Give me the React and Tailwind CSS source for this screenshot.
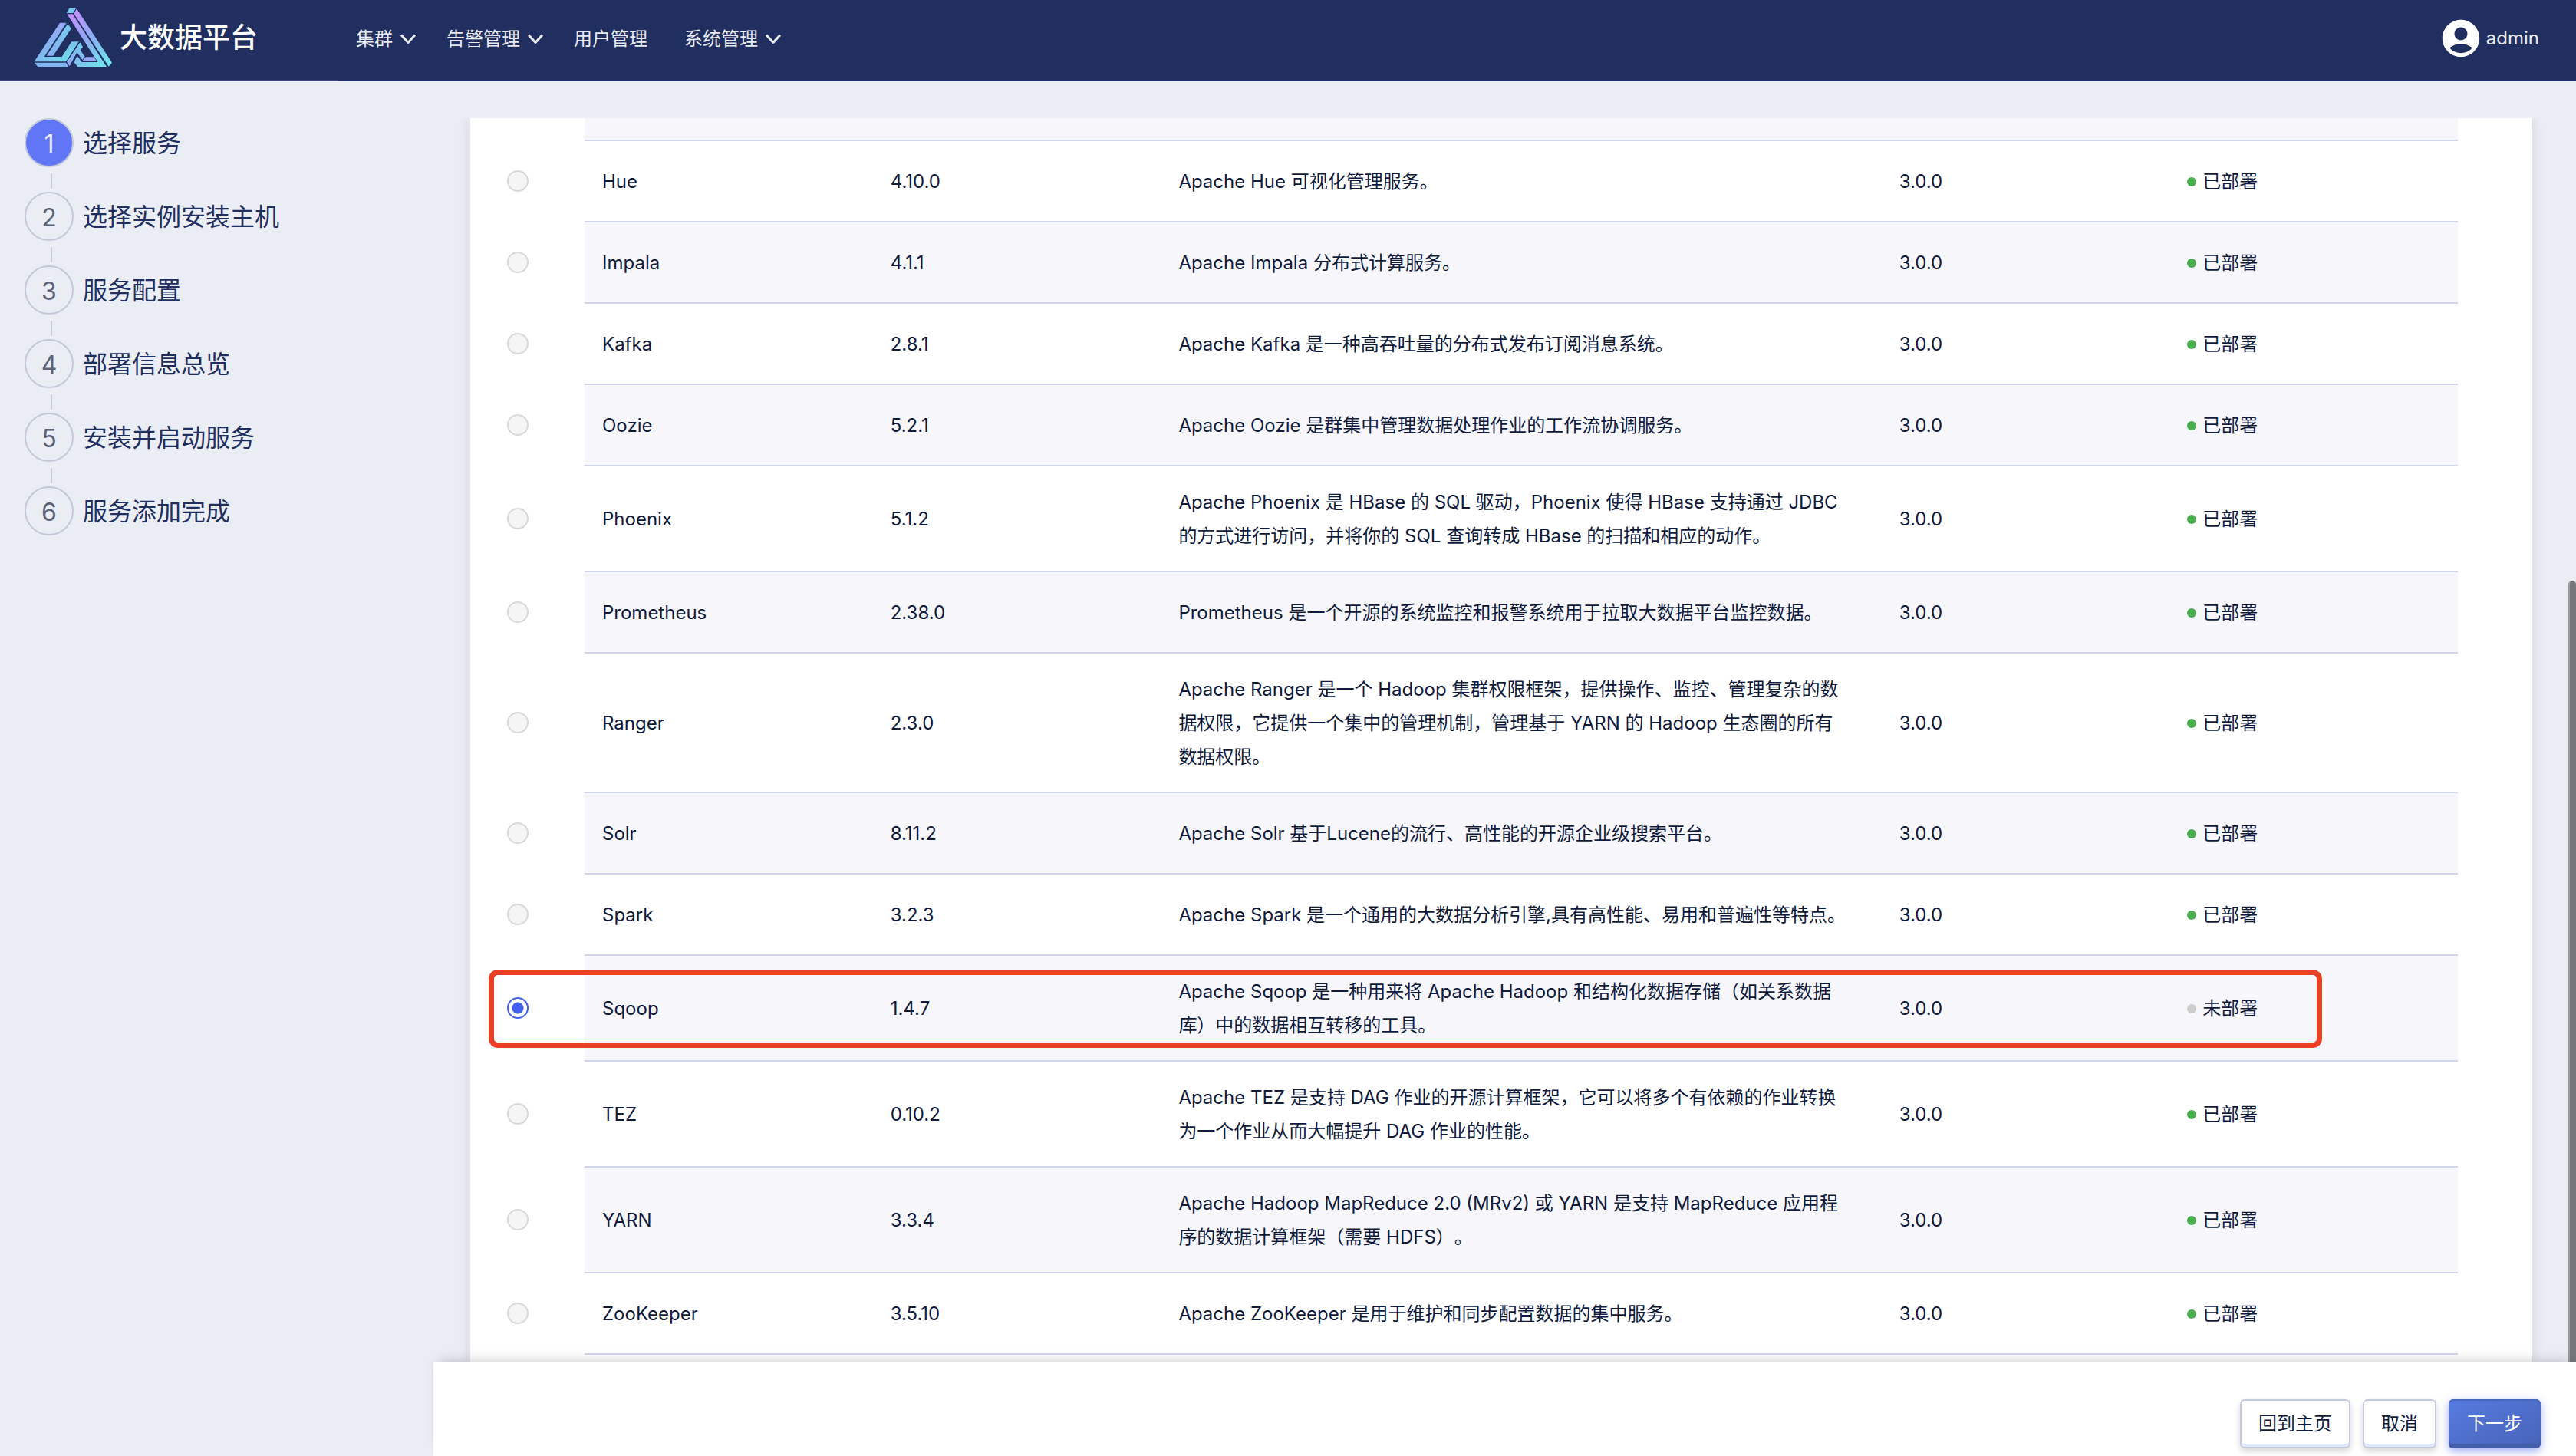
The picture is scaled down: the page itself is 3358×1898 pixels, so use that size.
import { MdAccountCircle } from "react-icons/md";

const STEPS = ["选择服务", "选择实例安装主机", "服务配置", "部署信息总览", "安装并启动服务", "服务添加完成"];

const NAV = [
  { label: "集群", menu: true },
  { label: "告警管理", menu: true },
  { label: "用户管理", menu: false },
  { label: "系统管理", menu: true },
];

const SERVICES = [
  { name: "Hue", version: "4.10.0", text: "Apache Hue 可视化管理服务。", deployed: true },
  { name: "Impala", version: "4.1.1", text: "Apache Impala 分布式计算服务。", deployed: true },
  { name: "Kafka", version: "2.8.1", text: "Apache Kafka 是一种高吞吐量的分布式发布订阅消息系统。", deployed: true },
  { name: "Oozie", version: "5.2.1", text: "Apache Oozie 是群集中管理数据处理作业的工作流协调服务。", deployed: true },
  { name: "Phoenix", version: "5.1.2", text: "Apache Phoenix 是 HBase 的 SQL 驱动，Phoenix 使得 HBase 支持通过 JDBC\n的方式进行访问，并将你的 SQL 查询转成 HBase 的扫描和相应的动作。", deployed: true },
  { name: "Prometheus", version: "2.38.0", text: "Prometheus 是一个开源的系统监控和报警系统用于拉取大数据平台监控数据。", deployed: true },
  { name: "Ranger", version: "2.3.0", text: "Apache Ranger 是一个 Hadoop 集群权限框架，提供操作、监控、管理复杂的数\n据权限，它提供一个集中的管理机制，管理基于 YARN 的 Hadoop 生态圈的所有\n数据权限。", deployed: true },
  { name: "Solr", version: "8.11.2", text: "Apache Solr 基于Lucene的流行、高性能的开源企业级搜索平台。", deployed: true },
  { name: "Spark", version: "3.2.3", text: "Apache Spark 是一个通用的大数据分析引擎,具有高性能、易用和普遍性等特点。", deployed: true },
  { name: "Sqoop", version: "1.4.7", text: "Apache Sqoop 是一种用来将 Apache Hadoop 和结构化数据存储（如关系数据\n库）中的数据相互转移的工具。", deployed: false },
  { name: "TEZ", version: "0.10.2", text: "Apache TEZ 是支持 DAG 作业的开源计算框架，它可以将多个有依赖的作业转换\n为一个作业从而大幅提升 DAG 作业的性能。", deployed: true },
  { name: "YARN", version: "3.3.4", text: "Apache Hadoop MapReduce 2.0 (MRv2) 或 YARN 是支持 MapReduce 应用程\n序的数据计算框架（需要 HDFS）。", deployed: true },
  { name: "ZooKeeper", version: "3.5.10", text: "Apache ZooKeeper 是用于维护和同步配置数据的集中服务。", deployed: true },
];

function Logo() {
  return (
    <svg viewBox="0 0 360 270" className="h-[90px] w-[120px] shrink-0" aria-hidden="true">
      <defs>
        <linearGradient id="logo-right" gradientUnits="userSpaceOnUse" x1="165" y1="45" x2="320" y2="240">
          <stop offset="0" stopColor="#c38ffc" />
          <stop offset="0.45" stopColor="#8fa9f2" />
          <stop offset="1" stopColor="#6be9ea" />
        </linearGradient>
        <linearGradient id="logo-left" gradientUnits="userSpaceOnUse" x1="90" y1="90" x2="170" y2="220">
          <stop offset="0" stopColor="#9aa5f4" />
          <stop offset="0.5" stopColor="#80b8ef" />
          <stop offset="1" stopColor="#6cdfeb" />
        </linearGradient>
        <linearGradient id="logo-inner" gradientUnits="userSpaceOnUse" x1="160" y1="85" x2="85" y2="205">
          <stop offset="0" stopColor="#74cdee" />
          <stop offset="1" stopColor="#88adf2" />
        </linearGradient>
        <linearGradient id="logo-mid" gradientUnits="userSpaceOnUse" x1="205" y1="160" x2="165" y2="240">
          <stop offset="0" stopColor="#74cdee" />
          <stop offset="1" stopColor="#93a8f3" />
        </linearGradient>
      </defs>
      <path d="M164 19h26l-12 20h-26z" fill="#77c6ef" />
      <path d="M192 22l138 211-13 15L181 42z" fill="url(#logo-right)" />
      <path d="M154 43h22l133 206H196l-15-18 13-25 18 25h62z" fill="url(#logo-right)" />
      <path d="M227 211h32l11 16h-57z" fill="#97a8f2" />
      <path d="M126 77h26L65 210h69l38-59h28l-50 78H26z" fill="url(#logo-left)" />
      <path d="M157 80l13 20-70 106H74z" fill="url(#logo-inner)" />
      <path d="M26 233h124l10 16H40z" fill="#7fb6f0" />
      <path d="M205 154l11 18-10 12 18 26-10 12-21-29-29 54-11-17z" fill="url(#logo-mid)" />
    </svg>
  );
}

function Chevron() {
  return (
    <svg viewBox="0 0 20 14" className="h-3.5 w-5" fill="none" stroke="currentColor" strokeWidth="3" strokeLinejoin="round" aria-hidden="true">
      <path d="M1 1.5l9 10 9-10" />
    </svg>
  );
}

function Header() {
  return (
    <header className="flex h-[106px] shrink-0 items-stretch bg-[#212f60] text-[#e9eaef]">
      <div className="flex w-[440px] items-center border-b-2 border-[#3e4373] pb-1.5 pl-9">
        <Logo />
        <h1 className="text-4xl font-medium text-white">大数据平台</h1>
      </div>
      <nav className="flex items-center gap-10 pb-1 pl-6 text-2xl">
        {NAV.map((item) =>
          item.menu ? (
            <button key={item.label} type="button" className="flex items-center gap-2.5">
              {item.label}
              <Chevron />
            </button>
          ) : (
            <button key={item.label} type="button" className="pr-2">
              {item.label}
            </button>
          )
        )}
      </nav>
      <button type="button" className="ml-auto flex items-center gap-1 pr-12 pb-1.5 text-2xl">
        <MdAccountCircle className="size-[58px] text-white" />
        admin
      </button>
    </header>
  );
}

function Steps() {
  return (
    <ol className="w-[565px] shrink-0 pt-12 pl-8">
      {STEPS.map((label, i) => (
        <li key={label}>
          {i > 0 && <div className="mt-2 mb-1 ml-[34px] h-5 w-0.5 bg-[#c3c9d9]" />}
          <div className="flex items-center gap-3 text-[32px] text-[#212f60]">
            <span
              className={
                i === 0
                  ? "flex size-16 items-center justify-center rounded-full border-2 border-[#c3c9d9] bg-[#6076f6] pt-1 text-[#eaecf5]"
                  : "flex size-16 items-center justify-center rounded-full border-2 border-[#c3c9d9] pt-1 text-[#5b6478]"
              }
            >
              {i + 1}
            </span>
            <span className="pt-0.5 leading-none">{label}</span>
          </div>
        </li>
      ))}
    </ol>
  );
}

function ServiceRow({ service, index }) {
  const selected = service.name === "Sqoop";
  const cell =
    index % 2
      ? "border-b-2 border-[#d2d5e8] bg-[#f6f6fb] px-[23px] pt-[25px] pb-[23px]"
      : "border-b-2 border-[#d2d5e8] px-[23px] pt-[25px] pb-[23px]";
  const id = `service-${service.name}`;
  return (
    <tr className="relative h-[106px]">
      <td className="pb-0.5 pl-12">
        <input
          id={id}
          type="radio"
          name="service"
          defaultChecked={selected}
          disabled={service.deployed}
          className="block size-7 appearance-none rounded-full border-2 border-[#d9d9d9] bg-[#f5f5f5] checked:border-[#4361ee] checked:bg-[radial-gradient(circle,#4361ee_7px,#ffffff_8px)]"
        />
        {selected && (
          <div className="pointer-events-none absolute inset-y-[18px] right-[177px] left-6 rounded-xl border-[7px] border-[#ea4125]" />
        )}
      </td>
      <td className={cell}>
        <label htmlFor={id}>{service.name}</label>
      </td>
      <td className={cell}>{service.version}</td>
      <td className={cell}>
        <p className="whitespace-pre-line">{service.text}</p>
      </td>
      <td className={cell}>3.0.0</td>
      <td className={cell}>
        <span className="flex items-center gap-2">
          <span className={service.deployed ? "size-3 rounded-full bg-[#4bae4f]" : "size-3 rounded-full bg-[#cccccc]"} />
          {service.deployed ? "已部署" : "未部署"}
        </span>
      </td>
    </tr>
  );
}

function Footer() {
  const plain =
    "h-16 rounded-md border-2 border-[#c3cad9] bg-white px-[22px] text-2xl text-[#0f1a3c] shadow-[inset_0_-4px_0_#e1e7fa,0_4px_8px_rgba(0,0,0,0.16)]";
  return (
    <footer className="relative z-10 flex h-[122px] shrink-0 items-start justify-end gap-4 bg-white pt-12 pr-[46px] shadow-[0_-8px_16px_-8px_rgba(0,0,0,0.25)]">
      <button type="button" className={plain}>回到主页</button>
      <button type="button" className={plain}>取消</button>
      <button
        type="button"
        className="h-16 rounded-md bg-linear-to-br from-[#577be0] to-[#4763b8] px-6 text-2xl text-white shadow-[inset_0_-6px_0_#435fab,inset_0_2px_0_#4767bf,0_4px_12px_rgba(67,97,238,0.5)]"
      >
        下一步
      </button>
    </footer>
  );
}

export default function App() {
  return (
    <div
      className="flex h-screen flex-col overflow-hidden bg-[#ebedf5] font-[Inter,'Noto_Sans_CJK_SC',sans-serif] text-[#0f1a3c] [text-spacing-trim:space-all]"
      lang="zh-CN"
    >
      <Header />
      <div className="flex min-h-0 flex-1">
        <Steps />
        <div className="relative flex min-w-0 flex-1 flex-col">
          <main className="mt-12 flex-1 overflow-hidden pr-[58px] pl-12">
            <div className="h-full bg-white pr-24 shadow-[0_0_16px_rgba(0,0,0,0.12)]">
              <table className="w-full table-fixed border-separate border-spacing-0 text-left text-2xl leading-[44px]">
                <colgroup>
                  <col className="w-[149px]" />
                  <col className="w-[14.5%]" />
                  <col className="w-[14.5%]" />
                  <col />
                  <col className="w-[14.5%]" />
                  <col className="w-[14.5%]" />
                </colgroup>
                <tbody>
                  <tr>
                    <td />
                    <td colSpan={5} className="h-[30px] border-b-2 border-[#d2d5e8] bg-[#f6f6fb]" />
                  </tr>
                  {SERVICES.map((s, i) => (
                    <ServiceRow key={s.name} service={s} index={i} />
                  ))}
                </tbody>
              </table>
            </div>
          </main>
          <div className="absolute right-0 bottom-[122px] h-[1019px] w-2.5 rounded-t-full border-l-2 border-[#9a9b9e] bg-[#757679]" />
          <Footer />
        </div>
      </div>
    </div>
  );
}
